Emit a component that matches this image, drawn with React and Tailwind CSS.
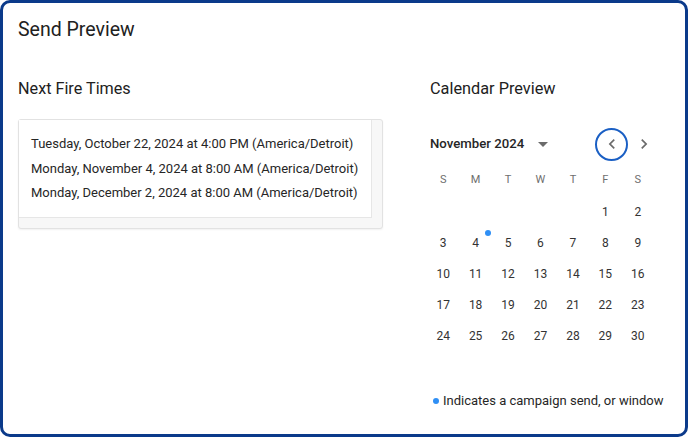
import React from 'react';

const fireTimes = [
  'Tuesday, October 22, 2024 at 4:00 PM (America/Detroit)',
  'Monday, November 4, 2024 at 8:00 AM (America/Detroit)',
  'Monday, December 2, 2024 at 8:00 AM (America/Detroit)',
];

const weekdays = ['S', 'M', 'T', 'W', 'T', 'F', 'S'];

// November 2024 starts on a Friday
const weeks = [
  [null, null, null, null, null, 1, 2],
  [3, 4, 5, 6, 7, 8, 9],
  [10, 11, 12, 13, 14, 15, 16],
  [17, 18, 19, 20, 21, 22, 23],
  [24, 25, 26, 27, 28, 29, 30],
];

const sendDays = [4];

const ChevronLeft = () => (
  <svg width="20" height="20" viewBox="0 0 24 24" fill="#6b6b6b">
    <path d="M15.41 16.59 10.83 12l4.58-4.59L14 6l-6 6 6 6z" />
  </svg>
);

const ChevronRight = () => (
  <svg width="20" height="20" viewBox="0 0 24 24" fill="#6b6b6b">
    <path d="M8.59 16.59 13.17 12 8.59 7.41 10 6l6 6-6 6z" />
  </svg>
);

const DropDown = () => (
  <svg width="24" height="24" viewBox="0 0 24 24" fill="#6b6b6b">
    <path d="M7 10l5 5 5-5z" />
  </svg>
);

const App = () => {
  return (
    <div className="w-[688px] h-[437px] bg-white font-['Roboto',sans-serif] text-[#212121]">
      <div className="w-full h-full border-[3px] border-[#0b3a8a] rounded-[10px] px-[15px] pt-[15px]">
        <h1 className="text-[19.5px] leading-[24px]">Send Preview</h1>

        <div className="flex mt-[35px]">
          {/* Next fire times */}
          <div className="w-[365px]">
            <h2 className="text-[16.2px] leading-[24px]">Next Fire Times</h2>
            <div className="mt-[18px] h-[110px] bg-[#f7f7f7] border border-[#e2e2e2] rounded-[3px] shadow-[0_1px_2px_rgba(0,0,0,0.06)]">
              <div className="w-[353px] h-[98px] bg-white border-r border-b border-[#e6e6e6] pl-[12px] pt-[12px]">
                {fireTimes.map((t) => (
                  <div key={t} className="whitespace-nowrap text-[13px] leading-[24.5px] text-[#262626]">
                    {t}
                  </div>
                ))}
              </div>
            </div>
          </div>

          {/* Calendar preview */}
          <div className="ml-[47px] w-[240px]">
            <h2 className="text-[16.3px] leading-[24px]">Calendar Preview</h2>

            <div className="mt-[23px] h-[40px] flex items-center">
              <span className="text-[13.2px] font-medium text-[#262626]">November 2024</span>
              <span className="ml-[7px] flex items-center">
                <DropDown />
              </span>
              <div className="ml-auto flex items-center mr-[10px]">
                <button className="w-[33px] h-[33px] rounded-full border-2 border-[#1a5fc4] flex items-center justify-center">
                  <ChevronLeft />
                </button>
                <button className="ml-[-1px] w-[33px] h-[33px] flex items-center justify-center">
                  <ChevronRight />
                </button>
              </div>
            </div>

            <div className="ml-[-3px] w-[227px]">
              <div className="grid grid-cols-7 h-[33px] items-center">
                {weekdays.map((d, i) => (
                  <div key={i} className="text-center text-[11px] text-[#6e6e6e]">
                    {d}
                  </div>
                ))}
              </div>
              {weeks.map((week, wi) => (
                <div key={wi} className="grid grid-cols-7 h-[30.8px] items-center">
                  {week.map((day, di) => (
                    <div key={di} className="relative text-center text-[12px] text-[#333]">
                      {day}
                      {sendDays.includes(day) && (
                        <span className="absolute left-[26px] top-[-4px] w-[6px] h-[6px] rounded-full bg-[#2f8ff5]" />
                      )}
                    </div>
                  ))}
                </div>
              ))}
            </div>

            <div className="mt-[40px] flex items-center whitespace-nowrap">
              <span className="ml-[3px] w-[6px] h-[6px] rounded-full bg-[#2f8ff5]" />
              <span className="ml-[4px] text-[13px] text-[#262626]">
                Indicates a campaign send, or window
              </span>
            </div>
          </div>
        </div>
      </div>
    </div>
  );
};

export default App;
